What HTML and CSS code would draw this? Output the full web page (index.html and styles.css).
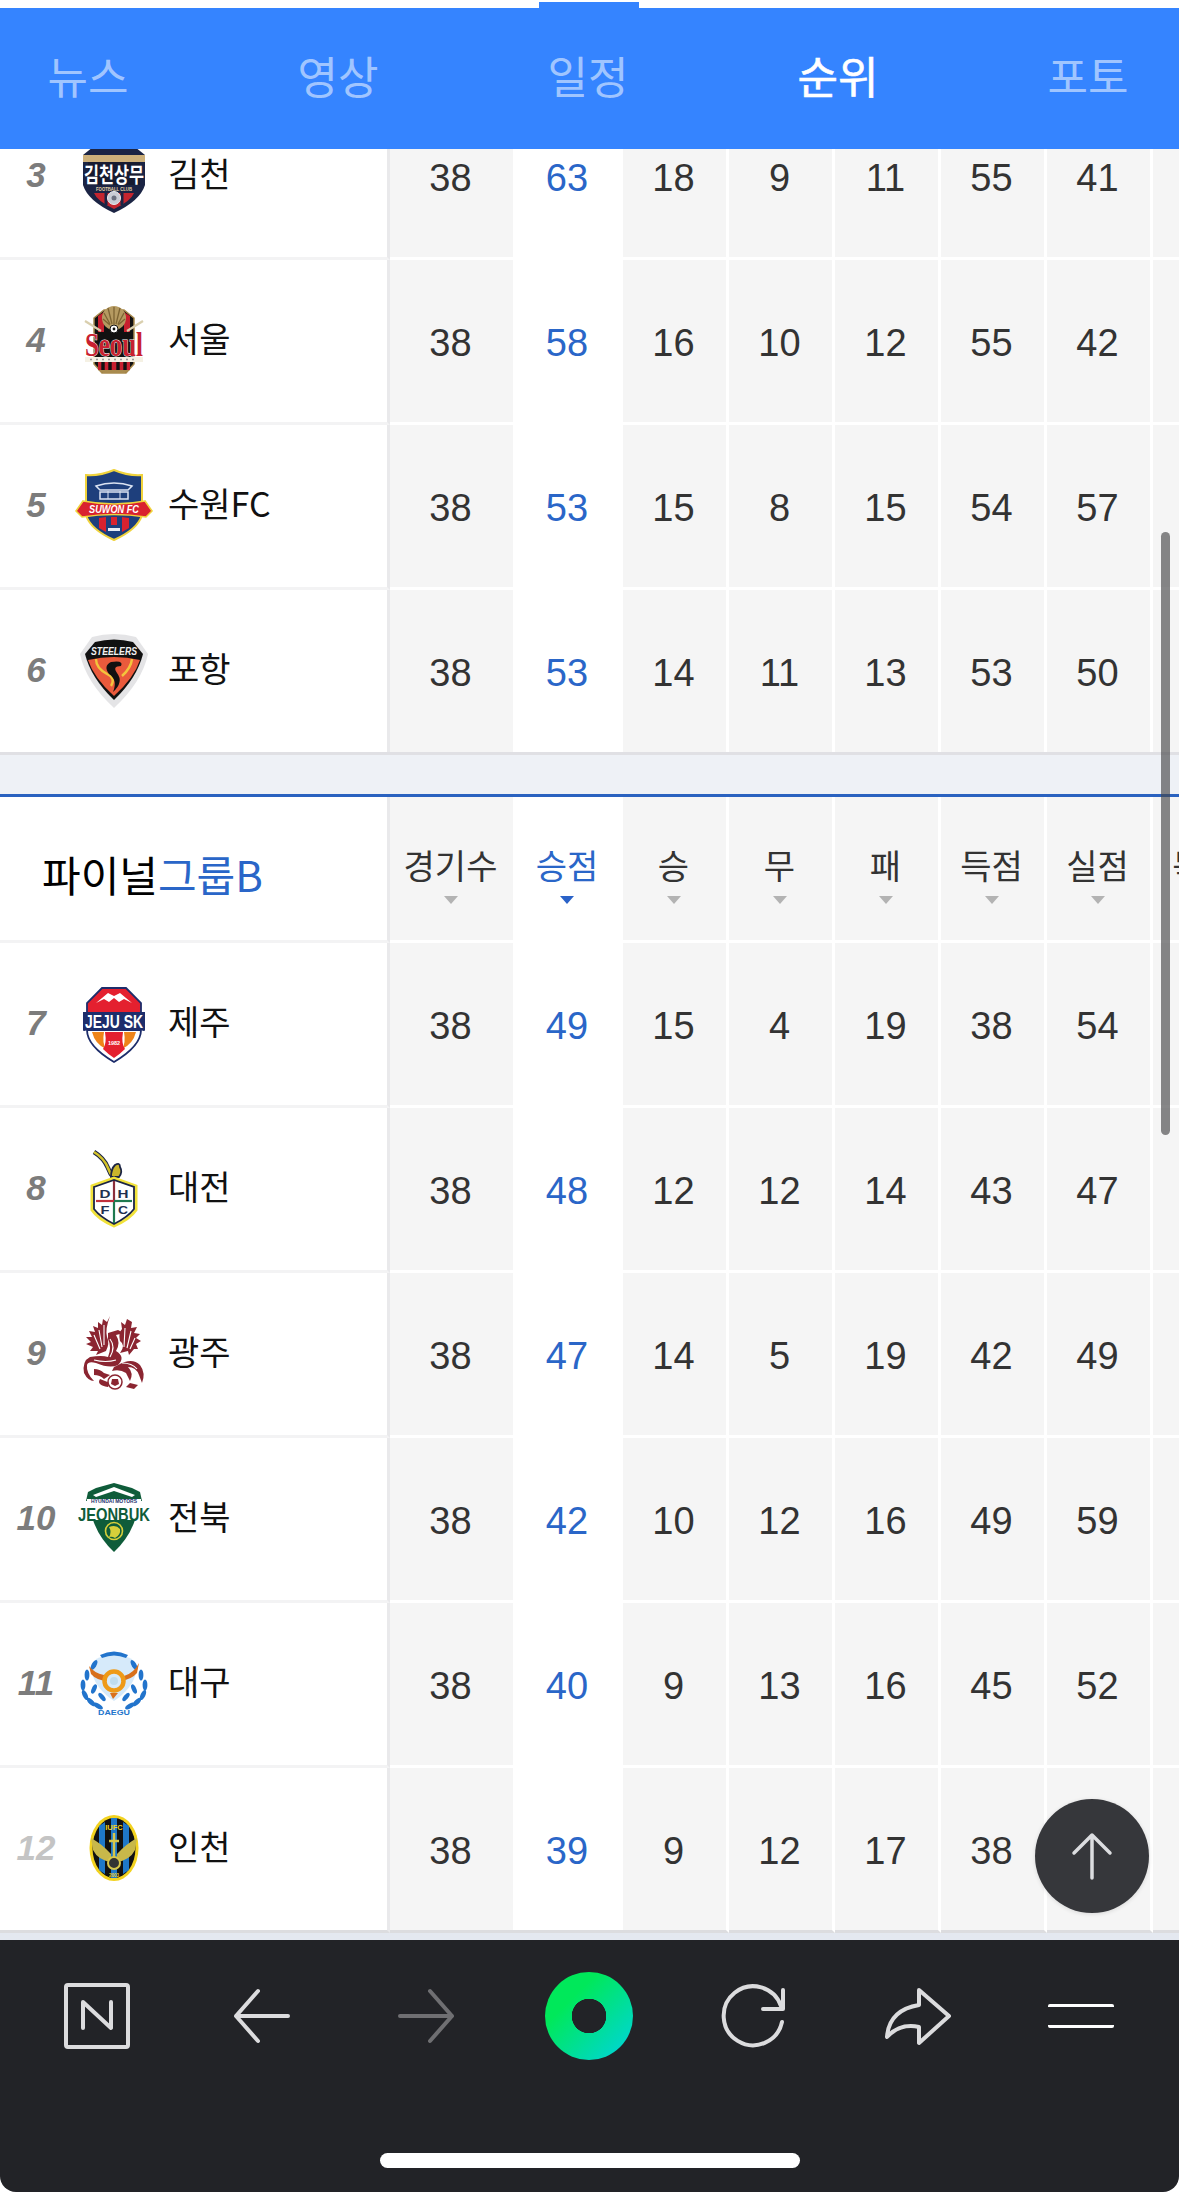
FILE: index.html
```html
<!DOCTYPE html>
<html lang="ko">
<head>
<meta charset="utf-8">
<title>순위</title>
<link rel="stylesheet" href="styles.css">
</head>
<body>
<div class="app">
  <div class="status"><span class="tab-notch"></span></div>
  <nav class="tabs">
    <a class="tab">뉴스</a><a class="tab">영상</a><a class="tab">일정</a><a class="tab is-active">순위</a><a class="tab">포토</a>
  </nav>
  <main class="board">
    <div class="table">
      <div class="row">
        <div class="team"><span class="rank">3</span>
          <svg class="logo" viewBox="0 0 80 80"><path d="M9 20 L24 8 H56 L71 20 V50 Q66 66 40 78 Q14 66 9 50Z" fill="#1b2444"/><rect x="9" y="20" width="62" height="7" fill="#cdb07a"/><path d="M14 27 H66 V50 H14Z" fill="#171b30"/><path d="M20 58 H60 Q57 66 40 74 Q23 66 20 58Z" fill="#c4252f"/><path d="M32 57 V70 M48 57 V70" stroke="#1b2444" stroke-width="3"/><text class="lg lg-kr" x="40" y="47" textLength="60" lengthAdjust="spacingAndGlyphs" font-size="21" fill="#fff">김천상무</text><text class="lg" x="40" y="55.500" font-size="5" textLength="36" lengthAdjust="spacingAndGlyphs" fill="#e6d3a8">FOOTBALL CLUB</text><circle cx="40" cy="63" r="6.500" fill="#c9ccd6" stroke="#eceef2"/><circle cx="40" cy="63" r="2.500" fill="#6c7080"/></svg>
          <span class="name">김천</span></div>
        <span class="cell">38</span><span class="cell pts">63</span><span class="cell">18</span><span class="cell">9</span><span class="cell">11</span><span class="cell">55</span><span class="cell">41</span><span class="cell"></span>
      </div>
      <div class="row">
        <div class="team"><span class="rank">4</span>
          <svg class="logo" viewBox="0 0 80 80"><path d="M20 18 L30 10 H50 L60 18 V64 L52 73 H28 L20 64Z" fill="#111" stroke="#a98b4e" stroke-width="1.500"/><path d="M24 16 L30 12 V32 H24Z M50 12 L56 16 V32 H50Z" fill="#c8202f"/><circle cx="40" cy="18" r="12" fill="#b59a61"/><path d="M30 13 L36 24 M40 7 V24 M50 13 L44 24 M34 8 L38 24 M46 8 L42 24 M29 19 L36 25 M51 19 L44 25" stroke="#7d6433" stroke-width="1.300"/><path d="M11 21 L27 31 M69 21 L53 31" stroke="#d9cfae" stroke-width="2.200"/><circle cx="40" cy="29" r="4" fill="#fff" stroke="#111"/><circle cx="40" cy="29" r="1.400" fill="#111"/><text class="lg lg-serif" x="40" y="56" font-size="33" textLength="58" lengthAdjust="spacingAndGlyphs" fill="#c8202f" stroke="#fff" stroke-width="1" paint-order="stroke">Seoul</text><rect x="11" y="57" width="58" height="5" fill="#f5f1e4"/><path d="M16 59.500 H64" stroke="#999" stroke-width="1.400" stroke-dasharray="2 4"/><rect x="24" y="62" width="32" height="8" fill="#c8202f"/><path d="M29 62 V70 M36 62 V70 M44 62 V70 M51 62 V70" stroke="#111" stroke-width="3.400"/><path d="M24 70 H56 L51 73 H29Z" fill="#a98b4e"/></svg>
          <span class="name">서울</span></div>
        <span class="cell">38</span><span class="cell pts">58</span><span class="cell">16</span><span class="cell">10</span><span class="cell">12</span><span class="cell">55</span><span class="cell">42</span><span class="cell"></span>
      </div>
      <div class="row">
        <div class="team"><span class="rank">5</span>
          <svg class="logo" viewBox="0 0 80 80"><path d="M12 10 Q26 11 40 5 Q54 11 68 10 V50 Q64 64 40 75 Q16 64 12 50Z" fill="#1e3f7c" stroke="#f0d33c" stroke-width="2"/><path d="M22 21 Q40 15 58 21 L54 25 H26Z M26 27 H54 V34 H26Z" fill="none" stroke="#dbe3f2" stroke-width="1.500"/><path d="M34 26 V34 M46 26 V34" stroke="#dbe3f2"/><path d="M2 46 L9 36 Q40 42 71 36 L78 46 L72 52 Q40 47 8 52Z" fill="#d9222f" stroke="#f0d33c" stroke-width="1.600"/><text class="lg lg-it" x="40" y="47.500" font-size="11" textLength="50" lengthAdjust="spacingAndGlyphs" fill="#fff">SUWON FC</text><path d="M19 54 Q40 50 61 54 V56 Q58 65 40 72 Q22 65 19 56Z" fill="#1e3f7c"/><path d="M25 53 V63 L32 67 V52Z M48 52 V67 L55 63 V53Z M37 52 H43 V60 H37Z" fill="#d9222f"/><rect x="34" y="63" width="12" height="3" fill="#e9edf5"/></svg>
          <span class="name">수원FC</span></div>
        <span class="cell">38</span><span class="cell pts">53</span><span class="cell">15</span><span class="cell">8</span><span class="cell">15</span><span class="cell">54</span><span class="cell">57</span><span class="cell"></span>
      </div>
      <div class="row">
        <div class="team"><span class="rank">6</span>
          <svg class="logo" viewBox="0 0 80 80"><path d="M18 7 Q40 1 62 7 L74 24 Q68 52 40 78 Q12 52 6 24Z" fill="#e4e4e6"/><path d="M21 12 Q40 7 59 12 L69 24 Q63 48 40 70 Q17 48 11 24Z" fill="#111"/><path d="M14 30 Q40 24 66 30 Q60 48 40 66 Q20 48 14 30Z" fill="#ea5a3c"/><text class="lg lg-it" x="40" y="25" font-size="11.500" textLength="46" lengthAdjust="spacingAndGlyphs" fill="#f1f1f1">STEELERS</text><path d="M22 29 Q22 38 33 44 Q42 48 37 56 M58 29 Q57 38 48 46" fill="none" stroke="#f3c53c" stroke-width="2.400"/><path d="M37 32 Q50 30 47 36 Q38 36 43 43 Q50 52 39 62 Q44 50 35 44 Q29 36 37 32Z" fill="#111"/></svg>
          <span class="name">포항</span></div>
        <span class="cell">38</span><span class="cell pts">53</span><span class="cell">14</span><span class="cell">11</span><span class="cell">13</span><span class="cell">53</span><span class="cell">50</span><span class="cell"></span>
      </div>

      <div class="band"></div>

      <div class="row row-head">
        <div class="group-title">파이널<em>그룹B</em></div>
        <span class="head">경기수</span><span class="head head-on">승점</span><span class="head">승</span><span class="head">무</span><span class="head">패</span><span class="head">득점</span><span class="head">실점</span><span class="head">득실</span>
      </div>

      <div class="row">
        <div class="team"><span class="rank">7</span>
          <svg class="logo" viewBox="0 0 80 80"><path d="M28 5 H52 L67 20 V31 H13 V20Z" fill="#e4202f" stroke="#1d2d6b" stroke-width="1.800"/><path d="M22 20 L34 10 L40 13 L46 10 L58 20 L50 16 L45 19 L40 15 L35 19 L30 16Z" fill="#fff"/><path d="M13 47 H67 Q67 63 40 79 Q13 63 13 47Z" fill="#fff" stroke="#1d2d6b" stroke-width="1.800"/><path d="M18 49 H30 Q28 60 32 66 Q21 61 18 49Z M62 49 H50 Q52 60 48 66 Q59 61 62 49Z" fill="#ef8419"/><path d="M31 49 H49 Q47 61 51 66 Q46 71 40 75 Q34 71 29 66 Q33 61 31 49Z" fill="#e4202f"/><path d="M9 29 H71 V47 Q71 49 67 47 H13 Q9 49 9 47Z" fill="#1d2d6b"/><text class="lg lg-b" x="40" y="45" font-size="19" textLength="58" lengthAdjust="spacingAndGlyphs" fill="#fff">JEJU SK</text><text class="lg lg-b" x="40" y="62" font-size="5.500" fill="#fff">1982</text></svg>
          <span class="name">제주</span></div>
        <span class="cell">38</span><span class="cell pts">49</span><span class="cell">15</span><span class="cell">4</span><span class="cell">19</span><span class="cell">38</span><span class="cell">54</span><span class="cell"></span>
      </div>
      <div class="row">
        <div class="team"><span class="rank">8</span>
          <svg class="logo" viewBox="0 0 80 80"><path d="M20 4 Q30 10 34 20 Q36 26 40 30" fill="none" stroke="#1b2444" stroke-width="4.500"/><path d="M20 4 Q30 10 34 20 Q36 26 40 30" fill="none" stroke="#d4c32a" stroke-width="2.600"/><path d="M37 29 Q37 21 41 17 Q46 14 46 19 Q49 24 45 29Z" fill="#c9b52b" stroke="#1b2444" stroke-width="1.800"/><path d="M18 38 L40 30 L62 38 V62 Q56 71 40 78 Q24 71 18 62Z" fill="#fff" stroke="#f1e23a" stroke-width="3"/><path d="M20 39 L40 32 L60 39 V61 Q54 69 40 76 Q26 69 20 61Z" fill="#fff" stroke="#1b2444" stroke-width="1.800"/><path d="M40 33 V53" stroke="#8c2f3c" stroke-width="2.200"/><path d="M40 53 V75" stroke="#1f7a4f" stroke-width="2.200"/><path d="M22 53 H40" stroke="#c0303c" stroke-width="2.200"/><path d="M40 53 H58" stroke="#1f7a4f" stroke-width="2.200"/><text class="lg lg-b" x="31" y="49.500" font-size="11" textLength="11" lengthAdjust="spacingAndGlyphs" fill="#22304f">D</text><text class="lg lg-b" x="49" y="49.500" font-size="11" textLength="11" lengthAdjust="spacingAndGlyphs" fill="#22304f">H</text><text class="lg lg-b" x="31" y="65.500" font-size="11" textLength="9" lengthAdjust="spacingAndGlyphs" fill="#22304f">F</text><text class="lg lg-b" x="49" y="65.500" font-size="11" textLength="10" lengthAdjust="spacingAndGlyphs" fill="#22304f">C</text></svg>
          <span class="name">대전</span></div>
        <span class="cell">38</span><span class="cell pts">48</span><span class="cell">12</span><span class="cell">12</span><span class="cell">14</span><span class="cell">43</span><span class="cell">47</span><span class="cell"></span>
      </div>
      <div class="row">
        <div class="team"><span class="rank">9</span>
          <svg class="logo" viewBox="0 0 80 80"><g fill="#8b2531"><path d="M36 3 L33 9 L29 6 L28 12 L24 9 L24 15 L19 13 L21 19 L15 18 L18 24 L12 24 L17 29 L12 31 L19 34 L16 38 L24 38 L22 42 L32 38 Q36 30 33 24 Q31 16 36 3Z"/><path d="M53 6 L51 12 L47 9 L48 16 Q44 20 46 28 Q52 32 46 40 L54 38 L55 42 L60 36 L64 36 L62 31 L67 28 L62 25 L66 21 L60 20 L63 14 L57 15 L58 9Z"/><path d="M34 20 L44 17 L50 20 L42 22 Q47 30 42 38 Q52 44 44 52 Q36 56 22 50 Q14 48 13 52 Q12 60 20 68 Q14 68 10 60 Q8 48 16 44 Q28 42 34 44 Q38 34 34 26Z"/><path d="M44 52 Q58 44 66 52 Q72 60 68 70 L65 62 Q62 54 54 54 Q60 60 56 68 L52 60 Q46 56 38 58 L40 54Z"/><path d="M20 56 Q26 56 30 60 L36 62 L30 66 Q26 62 20 62Z M26 66 Q22 72 34 74 L36 70Z M64 72 L56 70 L52 74 L60 76Z"/></g><path d="M30 12 L30 32 M25 17 L28 34 M20 22 L26 36 M51 15 L50 34 M57 18 L53 35 M61 25 L56 36 M36 26 Q42 34 36 44 M20 47 Q32 50 42 47 M48 50 Q58 50 63 56" fill="none" stroke="#fff" stroke-width="1.100"/><circle cx="41" cy="69" r="7" fill="#fff" stroke="#8b2531" stroke-width="1.500"/><path d="M38 66 L44 66 L45 71 L41 73 L37 71Z" fill="#8b2531"/></svg>
          <span class="name">광주</span></div>
        <span class="cell">38</span><span class="cell pts">47</span><span class="cell">14</span><span class="cell">5</span><span class="cell">19</span><span class="cell">42</span><span class="cell">49</span><span class="cell"></span>
      </div>
      <div class="row">
        <div class="team"><span class="rank">10</span>
          <svg class="logo" viewBox="0 0 80 80"><path d="M14 14 L22 10 L40 5 L58 10 L66 14 L68 23 H12Z" fill="#0f5c3a"/><path d="M19 17 L40 9 L61 17 L58 19 L40 13 L22 19Z" fill="#fff"/><rect x="13" y="21" width="54" height="5" fill="#fff"/><text class="lg lg-b" x="40" y="24.500" font-size="4.800" textLength="46" lengthAdjust="spacingAndGlyphs" fill="#23306e">HYUNDAI MOTORS</text><path d="M14 42 H66 Q60 64 40 79 Q20 64 14 42Z" fill="#fff"/><path d="M19 42 H61 Q55 60 40 74 Q25 60 19 42Z" fill="#0f5c3a"/><text class="lg lg-b" x="40" y="43" font-size="19" textLength="72" lengthAdjust="spacingAndGlyphs" fill="#0f5c3a">JEONBUK</text><circle cx="40" cy="53" r="8.500" fill="none" stroke="#d7cf3a" stroke-width="1.600"/><path d="M35 49 Q42 46 46 51 Q47 57 41 60 Q38 58 35 59 Q38 54 35 49Z" fill="#d7cf3a"/></svg>
          <span class="name">전북</span></div>
        <span class="cell">38</span><span class="cell pts">42</span><span class="cell">10</span><span class="cell">12</span><span class="cell">16</span><span class="cell">49</span><span class="cell">59</span><span class="cell"></span>
      </div>
      <div class="row">
        <div class="team"><span class="rank">11</span>
          <svg class="logo" viewBox="0 0 80 80"><path d="M22 16 Q40 8 58 16 L62 30 Q58 46 40 58 Q22 46 18 30Z" fill="#d6eafa"/><g fill="#2274cc"><ellipse cx="13" cy="32" rx="2.400" ry="5.500"/><ellipse cx="9" cy="42" rx="2.400" ry="5.500"/><ellipse cx="11" cy="52" rx="2.400" ry="5.500" transform="rotate(-25 11 52)"/><ellipse cx="17" cy="59" rx="2.400" ry="5.500" transform="rotate(-45 17 59)"/><ellipse cx="24" cy="63" rx="2.400" ry="5.500" transform="rotate(-60 24 63)"/><ellipse cx="20" cy="22" rx="2.400" ry="5.500" transform="rotate(30 20 22)"/><ellipse cx="20" cy="46" rx="2.200" ry="5" transform="rotate(25 20 46)"/><ellipse cx="28" cy="54" rx="2.200" ry="5" transform="rotate(-40 28 54)"/><ellipse cx="67" cy="32" rx="2.400" ry="5.500"/><ellipse cx="71" cy="42" rx="2.400" ry="5.500"/><ellipse cx="69" cy="52" rx="2.400" ry="5.500" transform="rotate(25 69 52)"/><ellipse cx="63" cy="59" rx="2.400" ry="5.500" transform="rotate(45 63 59)"/><ellipse cx="56" cy="63" rx="2.400" ry="5.500" transform="rotate(60 56 63)"/><ellipse cx="60" cy="22" rx="2.400" ry="5.500" transform="rotate(-30 60 22)"/><ellipse cx="60" cy="46" rx="2.200" ry="5" transform="rotate(-25 60 46)"/><ellipse cx="52" cy="54" rx="2.200" ry="5" transform="rotate(40 52 54)"/><path d="M26 12 Q40 5 54 12 L52 15 Q40 10 28 15Z"/></g><path d="M15 23 Q20 30 30 32 L33 38 Q22 37 17 31Z M65 20 Q60 30 50 33 L47 38 Q58 36 63 30Z" fill="#d8701c"/><circle cx="40" cy="38" r="9.500" fill="none" stroke="#ee9a18" stroke-width="4.500"/><circle cx="40" cy="38" r="4" fill="#bfdcee"/><path d="M36 50 L44 50 L39 56Z" fill="#d8701c"/><text class="lg lg-b" x="40" y="72" font-size="7" textLength="32" lengthAdjust="spacingAndGlyphs" fill="#2274cc">DAEGU</text></svg>
          <span class="name">대구</span></div>
        <span class="cell">38</span><span class="cell pts">40</span><span class="cell">9</span><span class="cell">13</span><span class="cell">16</span><span class="cell">45</span><span class="cell">52</span><span class="cell"></span>
      </div>
      <div class="row row-last">
        <div class="team"><span class="rank rank-faint">12</span>
          <svg class="logo" viewBox="0 0 80 80"><ellipse cx="40" cy="40" rx="24.500" ry="33" fill="#f2d21f"/><ellipse cx="40" cy="40" rx="21.500" ry="30" fill="#111"/><path d="M25 18 V62 L31 66 V14Z M37 10 H43 V70 H37Z M49 14 V66 L55 62 V18Z" fill="#1f78c8"/><text class="lg lg-b" x="40" y="22" font-size="7.500" fill="#f2d21f">IUFC</text><path d="M17 30 Q28 36 37 46 L37 54 Q24 52 19 42Z M63 30 Q52 36 43 46 L43 54 Q56 52 61 42Z" fill="#c8b84a"/><path d="M40 25 V52 M35 33 H45" stroke="#d8c64a" stroke-width="2.400"/><circle cx="40" cy="55" r="6" fill="#333" stroke="#d8c64a" stroke-width="2"/><text class="lg lg-b" x="40" y="69" font-size="4.500" fill="#f2d21f">2003</text></svg>
          <span class="name">인천</span></div>
        <span class="cell">38</span><span class="cell pts">39</span><span class="cell">9</span><span class="cell">12</span><span class="cell">17</span><span class="cell">38</span><span class="cell">53</span><span class="cell"></span>
      </div>
    </div>
    <span class="scroll-thumb"></span>
    <button class="to-top" type="button" aria-label="맨 위로">
      <svg viewBox="0 0 44 48" width="44" height="48"><path d="M22 46 V3 M4 21 L22 3 L40 21" fill="none" stroke="#dcdde0" stroke-width="3.500" stroke-linecap="round" stroke-linejoin="round"/></svg>
    </button>
  </main>
  <footer class="dock">
    <div class="dock-icons">
      <span class="dock-item"><svg width="68" height="68" viewBox="0 0 68 68"><rect x="3" y="3" width="62" height="62" rx="2" fill="none" stroke="#dcdcde" stroke-width="4"/><path d="M20 46 V20 L48 46 V20" fill="none" stroke="#dcdcde" stroke-width="4" stroke-linecap="round" stroke-linejoin="round"/></svg></span>
      <span class="dock-item"><svg width="58" height="56" viewBox="0 0 58 56"><path d="M56 28 H4 M26 3 L4 28 L26 53" fill="none" stroke="#dcdcde" stroke-width="4" stroke-linecap="round" stroke-linejoin="round"/></svg></span>
      <span class="dock-item"><svg width="58" height="56" viewBox="0 0 58 56"><path d="M4 28 H56 M34 3 L56 28 L34 53" fill="none" stroke="#6f6f72" stroke-width="4" stroke-linecap="round" stroke-linejoin="round"/></svg></span>
      <span class="dock-item"><span class="green-dot"></span></span>
      <span class="dock-item"><svg width="64" height="64" viewBox="0 0 64 64"><path d="M61 38 A29.500 29.500 0 1 1 60 22" fill="none" stroke="#dcdcde" stroke-width="4" stroke-linecap="round"/><path d="M62 6 V25 H42" fill="none" stroke="#dcdcde" stroke-width="4" stroke-linecap="round" stroke-linejoin="round"/></svg></span>
      <span class="dock-item"><svg width="70" height="60" viewBox="0 0 70 60"><path d="M37 4 L67 30 L37 57 V41 Q18 37 5 51 Q7 24 37 19Z" fill="none" stroke="#dcdcde" stroke-width="4" stroke-linejoin="round" stroke-linecap="round"/></svg></span>
      <span class="dock-item"><span class="menu-lines"></span></span>
    </div>
    <span class="home-bar"></span>
  </footer>
</div>
</body>
</html>
```
FILE: styles.css
```css
* { box-sizing: border-box; }
html, body { margin: 0; padding: 0; background: #fff; }
body { font-family: "Liberation Sans", "Noto Sans CJK KR", sans-serif; }
.app { width: 1179px; height: 2192px; display: flex; flex-direction: column; overflow: hidden; position: relative; background: #fff; }

.status { height: 8px; flex: none; position: relative; background: #fff; }
.tab-notch { position: absolute; left: 539px; top: 2px; width: 100px; height: 6px; background: #3584ff; }

.tabs { flex: none; height: 141px; background: #3584ff; display: flex; position: relative; z-index: 2; }
.tab { flex: none; width: 250px; padding-top: 36px; text-align: center; font: 400 44px/62px "Noto Sans CJK KR", sans-serif; color: rgba(255,255,255,.55); transform: translateX(-37px); }
.tab.is-active { color: #fff; -webkit-text-stroke: .6px #fff; }

.board { flex: 1; position: relative; overflow: hidden; min-height: 0; background: #e4e8f0; }
.table { margin-top: -54px; }

.row { display: grid; grid-template-columns: 390px 123px 110px repeat(6, 106px); height: 165px; }
.team { display: flex; align-items: center; border-right: 3px solid #e9e9eb; border-bottom: 3px solid #f3f3f4; background: #fff; }
.rank { width: 72px; flex: none; margin-right: 2px; margin-top: -2px; text-align: center; font: italic 700 35px/40px "Liberation Sans", sans-serif; color: #7c7c7c; }
.rank-faint { color: #c4c4c4; }
.logo { width: 80px; height: 80px; flex: none; margin-top: -2px; overflow: visible; }
.name { margin-left: 14px; margin-top: -6px; font: 400 34px/40px "Noto Sans CJK KR", "Liberation Sans", sans-serif; color: #111; white-space: nowrap; }

.lg { font-family: "Liberation Sans", sans-serif; font-weight: 700; text-anchor: middle; }
.lg-kr { font-family: "Noto Sans CJK KR", sans-serif; }
.lg-serif { font-family: "Liberation Serif", serif; }
.lg-it { font-style: italic; }

.cell { display: flex; align-items: center; justify-content: center; padding: 5px 2px 0 0; background: #f5f5f5; border-right: 3px solid #fff; border-bottom: 3px solid #fff; font-size: 38px; color: #333; }
.cell:nth-child(2) { border-right: 0; }
.pts { background: #fff; border-right: 0; color: #2a66c8; }

.band { height: 45px; background: #eef1f6; border-top: 3px solid #e0e0e4; border-bottom: 3px solid #2a62c0; margin-top: -3px; position: relative; }
.row-head { height: 146px; }
.group-title { display: flex; align-items: center; padding: 10px 0 0 42px; font: 400 42px/50px "Noto Sans CJK KR", sans-serif; color: #000; background: #fff; border-right: 3px solid #e9e9eb; border-bottom: 3px solid #f3f3f4; white-space: nowrap; }
.group-title em { font-style: normal; color: #2a66c8; }

.head { position: relative; display: flex; justify-content: center; padding: 46px 2px 0 0; background: #f5f5f5; border-right: 3px solid #fff; border-bottom: 3px solid #fff; font: 400 34px/44px "Noto Sans CJK KR", sans-serif; color: #333; white-space: nowrap; }
.head:nth-child(2) { border-right: 0; }
.head::after { content: ""; position: absolute; left: 50%; top: 99px; margin-left: -8px; border-left: 7px solid transparent; border-right: 7px solid transparent; border-top: 8px solid #b3b3b3; }
.head-on { background: #fff; border-right: 0; color: #2a66c8; }
.head-on::after { border-top-color: #2a62c8; }

.row-last .team, .row-last .cell { border-bottom-color: #dcdcdf; }

.scroll-thumb { position: absolute; left: 1161px; top: 383px; width: 9px; height: 603px; border-radius: 5px; background: rgba(70,70,72,.65); }
.to-top { position: absolute; left: 1035px; top: 1650px; width: 114px; height: 114px; padding: 0; border: 0; border-radius: 50%; background: #36373b; box-shadow: 0 1px 4px rgba(0,0,0,.12); display: flex; align-items: center; justify-content: center; }

.dock { flex: none; height: 252px; background: #fff; position: relative; }
.dock::before { content: ""; position: absolute; inset: 0; background: #222327; border-radius: 0 0 16px 16px; }
.dock-icons { position: relative; display: grid; grid-template-columns: repeat(7, 164px); padding: 43px 0 0 15px; height: 150px; }
.dock-item { display: flex; justify-content: center; align-items: center; height: 66px; }
.green-dot { width: 88px; height: 88px; border-radius: 50%; background: radial-gradient(circle at center, #222327 0 17px, transparent 17.5px), linear-gradient(135deg, #00e85a 30%, #00d6cf 90%); flex: none; }
.menu-lines { width: 66px; height: 24px; border-top: 3px solid #fff; border-bottom: 3px solid #fff; border-radius: 2px; }
.home-bar { position: absolute; left: 380px; top: 213px; width: 420px; height: 15px; border-radius: 8px; background: #fff; }
```
